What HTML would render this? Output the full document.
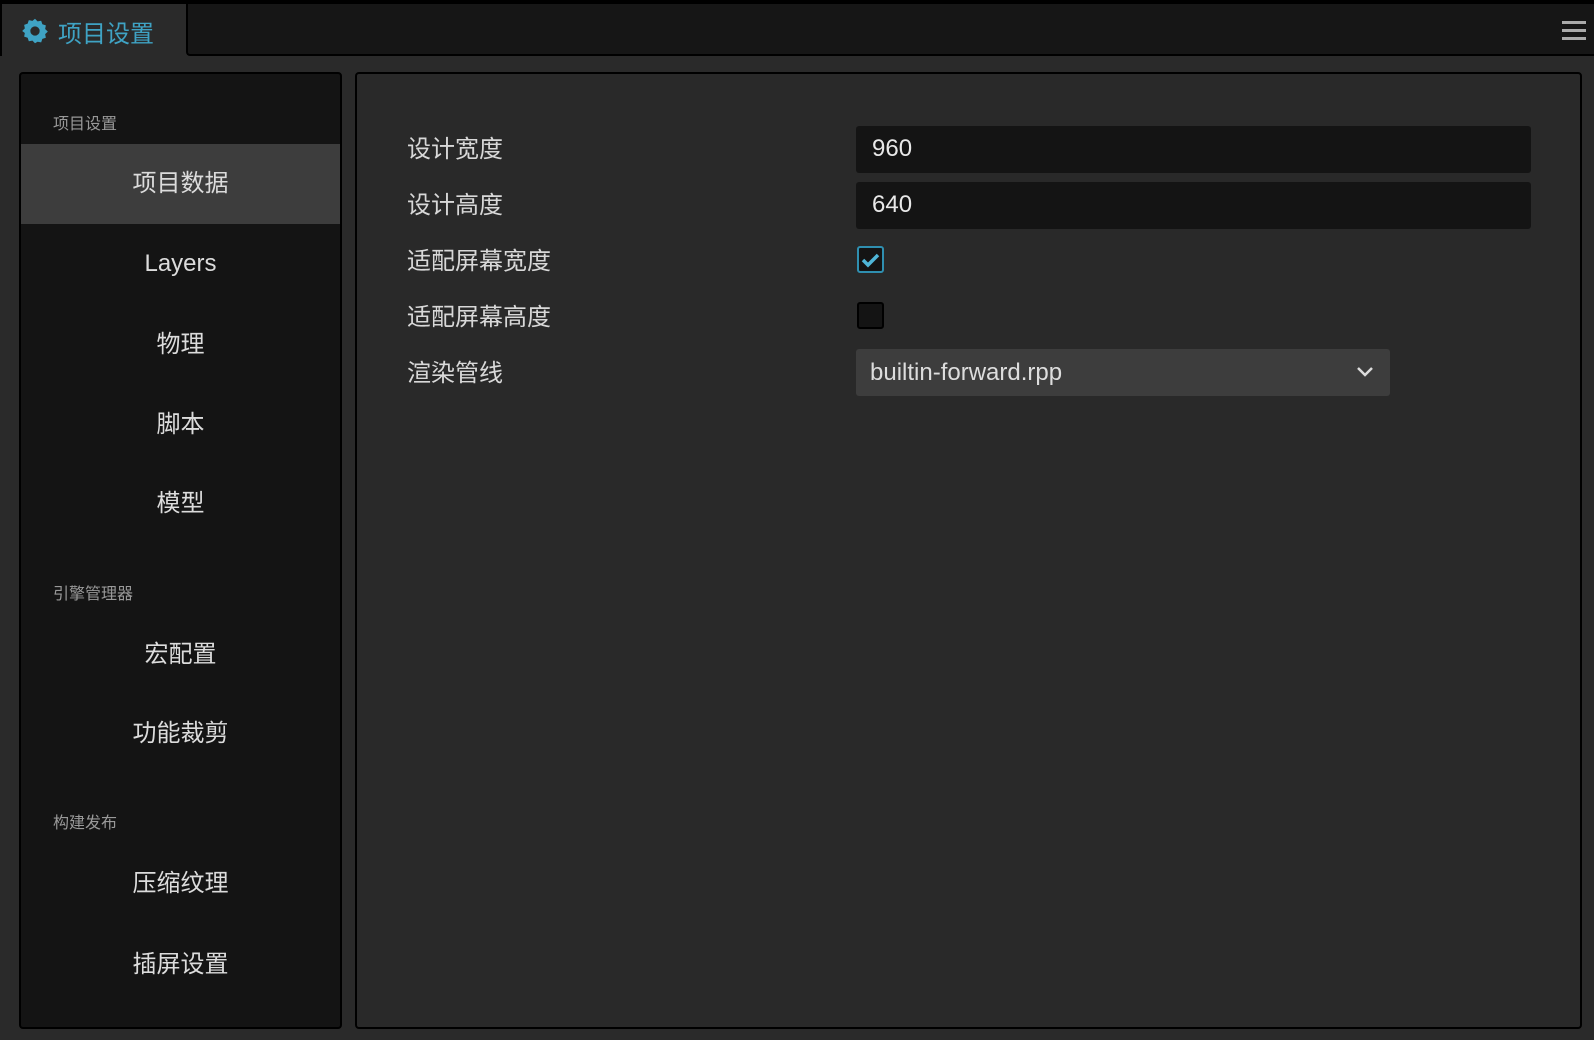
<!DOCTYPE html>
<html><head><meta charset="utf-8"><style>
*{margin:0;padding:0;box-sizing:border-box}
body{width:1594px;height:1040px;background:#2a2a2a;font-family:"Liberation Sans","Noto Sans CJK SC",sans-serif;position:relative;overflow:hidden;color:#d8d8d8}
.top{position:absolute;left:0;top:0;width:1594px;height:5px;background:#000}
.bar{position:absolute;left:186px;top:4px;width:1408px;height:52px;background:#161616;border-left:2px solid #000;border-bottom:2px solid #000;border-bottom-left-radius:4px}
.tab{position:absolute;left:0;top:4px;width:186px;height:52px;background:#2a2a2a;border-left:2px solid #000}
.tab span{position:absolute;left:56px;top:10px;font-size:24px;color:#3fa3c4}
.ham{position:absolute;left:1562px;top:21px;width:24px}
.ham i{display:block;height:3px;background:#aaa;margin-bottom:5px}
.side{position:absolute;left:19px;top:72px;width:323px;height:957px;background:#141414;border:2px solid #000;border-radius:4px}
.sec{position:absolute;left:32px;font-size:16px;color:#999}
.it{position:absolute;left:0;width:319px;height:80px;line-height:80px;text-align:center;font-size:24px;color:#dcdcdc}
.sel{background:#3d3d3d}
.main{position:absolute;left:355px;top:72px;width:1227px;height:957px;background:#292929;border:2px solid #000;border-radius:4px}
.lb{position:absolute;left:50px;font-size:24px;color:#d8d8d8}
.in{position:absolute;left:499px;width:675px;height:47px;background:#141414;border-radius:3px;font-size:24px;line-height:46px;padding-left:16px;color:#e8e8e8}
.cb{position:absolute;left:500px;width:27px;height:27px;background:#141414;border:2px solid #000;border-radius:3px}
.dd{position:absolute;left:499px;top:275px;width:534px;height:47px;background:#3d3d3d;border-radius:3px;font-size:24px;line-height:47px;padding-left:14px;color:#ddd}
</style></head><body>
<div class="top"></div>
<div class="bar"></div>
<div class="tab">
<svg style="position:absolute;left:19px;top:13px" width="28" height="28" viewBox="0 0 24 24"><path fill="#3fa3c4" d="M12 1.5l2.2 2.3 3.1-.6 1 3 3 1-.6 3.1 2.3 2.2-2.3 2.2.6 3.1-3 1-1 3-3.1-.6L12 22.5l-2.2-2.3-3.1.6-1-3-3-1 .6-3.1L1 12l2.3-2.2-.6-3.1 3-1 1-3 3.1.6z"/><circle cx="12" cy="12" r="4" fill="#2a2a2a"/></svg>
<span>项目设置</span></div>
<div class="ham"><i></i><i></i><i></i></div>
<div class="side">
<div class="sec" style="top:36px">项目设置</div>
<div class="it sel" style="top:70px">项目数据</div>
<div class="it" style="top:150px">Layers</div>
<div class="it" style="top:231px">物理</div>
<div class="it" style="top:311px">脚本</div>
<div class="it" style="top:390px">模型</div>
<div class="sec" style="top:506px">引擎管理器</div>
<div class="it" style="top:541px">宏配置</div>
<div class="it" style="top:620px">功能裁剪</div>
<div class="sec" style="top:735px">构建发布</div>
<div class="it" style="top:770px">压缩纹理</div>
<div class="it" style="top:851px">插屏设置</div>
</div>
<div class="main">
<div class="lb" style="top:55px">设计宽度</div>
<div class="in" style="top:52px">960</div>
<div class="lb" style="top:111px">设计高度</div>
<div class="in" style="top:108px">640</div>
<div class="lb" style="top:167px">适配屏幕宽度</div>
<div class="cb" style="top:172px;border-color:#2f8fb0"><svg width="23" height="23" viewBox="0 0 23 23" style="position:absolute;left:0;top:0"><path d="M4 12l5 5 10-10" fill="none" stroke="#4fb6d8" stroke-width="3.5"/></svg></div>
<div class="lb" style="top:223px">适配屏幕高度</div>
<div class="cb" style="top:228px"></div>
<div class="lb" style="top:279px">渲染管线</div>
<div class="dd">builtin-forward.rpp
<svg style="position:absolute;right:16px;top:17px" width="18" height="12" viewBox="0 0 18 12"><path d="M2 2l7 7 7-7" fill="none" stroke="#ddd" stroke-width="2.5"/></svg></div>
</div>
</body></html>
